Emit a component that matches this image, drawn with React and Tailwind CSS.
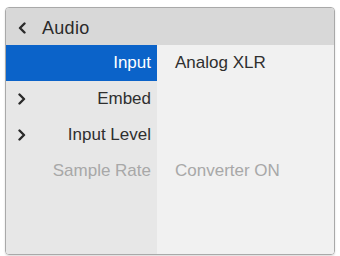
const rows = [
  { label: "Input", value: "Analog XLR", selected: true },
  { label: "Embed", chevron: true },
  { label: "Input Level", chevron: true },
  { label: "Sample Rate", value: "Converter ON", disabled: true },
];

function Chevron({ left = false, className = "" }) {
  return (
    <svg width="8" height="12" viewBox="0 0 8 12" className={className}>
      <path
        d={left ? "M6.5 1.5 L2 6 L6.5 10.5" : "M1.5 1.5 L6 6 L1.5 10.5"}
        fill="none"
        stroke="currentColor"
        strokeWidth="2.4"
        strokeLinecap="round"
        strokeLinejoin="round"
      />
    </svg>
  );
}

export default function App() {
  return (
    <div
      className="w-[340px] h-[256px] bg-white pt-[7px] pl-[5px]"
      style={{ fontFamily: '"Liberation Sans", Arial, sans-serif' }}
    >
      <div className="w-[330px] h-[248px] border border-[#a9a9a9] rounded-[4px] overflow-hidden flex flex-col shadow-[0_1px_2px_rgba(0,0,0,0.15)]">
        <div className="h-[37px] bg-[#d8d8d8] flex items-center pl-[12px] pt-[3px] text-[#2a2a2a] shrink-0">
          <Chevron left />
          <span className="ml-[16px] text-[18px] tracking-[0.3px]">Audio</span>
        </div>
        <div className="flex flex-1">
          <div className="w-[151px] bg-[#e7e7e7] flex flex-col">
            {rows.map((r) => (
              <div
                key={r.label}
                className={`h-[36px] flex items-center justify-between pl-[12px] pr-[6px] text-[17px] ${
                  r.selected
                    ? "bg-[#0b63c9] text-white"
                    : r.disabled
                    ? "text-[#a8a8a8]"
                    : "text-[#2f2f2f]"
                }`}
              >
                <span className="text-[#2a2a2a]">{r.chevron ? <Chevron /> : null}</span>
                <span>{r.label}</span>
              </div>
            ))}
          </div>
          <div className="flex-1 bg-[#f1f1f1] flex flex-col">
            {rows.map((r) => (
              <div
                key={r.label}
                className={`h-[36px] flex items-center pl-[18px] text-[17px] ${
                  r.disabled ? "text-[#a8a8a8]" : "text-[#2f2f2f]"
                }`}
              >
                {r.value}
              </div>
            ))}
          </div>
        </div>
      </div>
    </div>
  );
}
